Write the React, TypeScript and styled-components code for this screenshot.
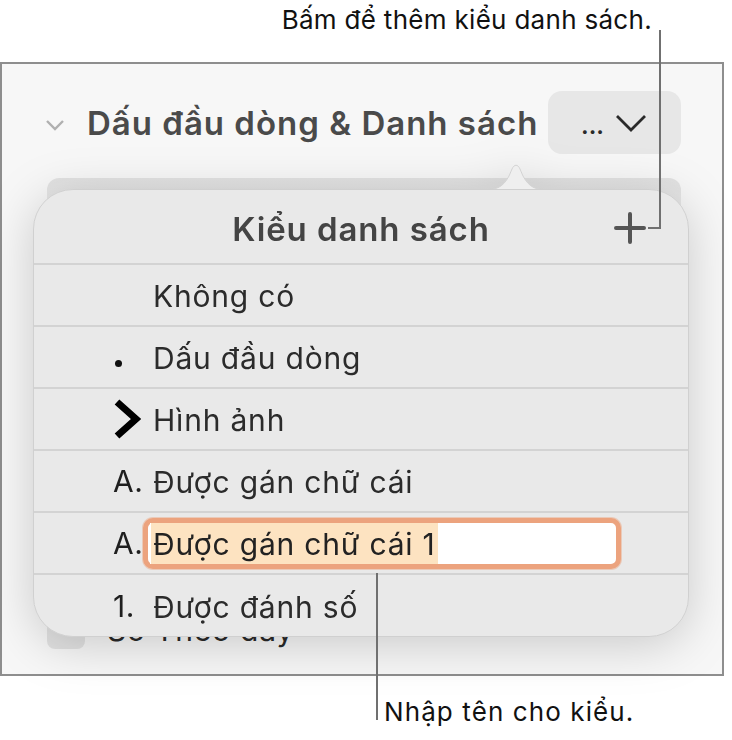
import React from 'react';
import styled, { createGlobalStyle } from 'styled-components';

const GlobalStyle = createGlobalStyle`
  html, body {
    margin: 0;
    padding: 0;
    background: #ffffff;
  }
  body {
    font-family: Inter, 'Noto Sans', sans-serif;
    color: #1f1f1f;
  }
`;

type MarkerKind = 'none' | 'bullet' | 'image' | 'letter' | 'number';

interface ListStyle {
  marker: MarkerKind;
  name: string;
  editing?: boolean;
}

const listStyles: ListStyle[] = [
  { marker: 'none', name: 'Không có' },
  { marker: 'bullet', name: 'Dấu đầu dòng' },
  { marker: 'image', name: 'Hình ảnh' },
  { marker: 'letter', name: 'Được gán chữ cái' },
  { marker: 'letter', name: 'Được gán chữ cái 1', editing: true },
  { marker: 'number', name: 'Được đánh số' },
];

const Marker: React.FC<{ kind: MarkerKind }> = ({ kind }) => {
  switch (kind) {
    case 'bullet':
      return <Dot />;
    case 'image':
      return (
        <svg width="30" height="42" viewBox="0 0 30 42">
          <path
            d="M4 4 L23 21 L4 38"
            fill="none"
            stroke="#000"
            strokeWidth="7"
            strokeLinejoin="miter"
          />
        </svg>
      );
    case 'letter':
      return <MarkerText>A.</MarkerText>;
    case 'number':
      return <MarkerText>1.</MarkerText>;
    default:
      return null;
  }
};

const App: React.FC = () => {
  return (
    <Stage>
      <GlobalStyle />
      <TopNote>Bấm để thêm kiểu danh sách.</TopNote>

      <Panel>
        <SectionHeader>
          <Disclosure width="20" height="12" viewBox="0 0 20 12">
            <path d="M2 2 L10 10 L18 2" fill="none" stroke="#b0b0b0" strokeWidth="2.4" />
          </Disclosure>
          <SectionTitle>Dấu đầu dòng &amp; Danh sách</SectionTitle>
          <MenuButton>
            <Ellipsis>...</Ellipsis>
            <svg width="34" height="20" viewBox="0 0 34 20">
              <path d="M3 3 L17 17 L31 3" fill="none" stroke="#2a2a2a" strokeWidth="2.8" />
            </svg>
          </MenuButton>
        </SectionHeader>
        <StylePicker />
        <CheckRow>
          <CheckBox />
          <CheckLabel>Số Theo dãy</CheckLabel>
        </CheckRow>
      </Panel>

      <BottomNote>Nhập tên cho kiểu.</BottomNote>

      <Popover>
        <Arrow width="66" height="30" viewBox="0 0 66 30">
          <path
            d="M0 30 C14 30 20 27 26 16 L29 9 C31 4 35 4 37 9 L40 16 C46 27 52 30 66 30 Z"
            fill="#efefef"
          />
          <path
            d="M0 30 C14 30 20 27 26 16 L29 9 C31 4 35 4 37 9 L40 16 C46 27 52 30 66 30"
            fill="none"
            stroke="#d2d2d2"
            strokeWidth="1"
          />
        </Arrow>
        <PopoverBody>
          <PopoverHeader>
            <PopoverTitle>Kiểu danh sách</PopoverTitle>
            <AddButton width="32" height="32" viewBox="0 0 32 32">
              <path d="M16 2 V30 M2 16 H30" stroke="#555" strokeWidth="4" strokeLinecap="round" />
            </AddButton>
          </PopoverHeader>
          {listStyles.map(item => (
            <StyleRow key={item.name} last={item.marker === 'number'}>
              <MarkerCell>
                <Marker kind={item.marker} />
              </MarkerCell>
              {item.editing ? (
                <NameField>
                  <Selection>{item.name}</Selection>
                </NameField>
              ) : (
                <StyleName>{item.name}</StyleName>
              )}
            </StyleRow>
          ))}
        </PopoverBody>
      </Popover>

      <Leaders width="732" height="740" viewBox="0 0 732 740">
        <path d="M660 30 V228 H648" fill="none" stroke="#707070" strokeWidth="2" />
        <path d="M377 573 V720" fill="none" stroke="#707070" strokeWidth="2" />
      </Leaders>
    </Stage>
  );
};

export default App;

const Stage = styled.div`
  position: relative;
  width: 732px;
  height: 740px;
  overflow: hidden;
`;

const TopNote = styled.div`
  height: 62px;
  box-sizing: border-box;
  padding: 4px 80px 0 0;
  text-align: right;
  font-size: 26px;
  letter-spacing: 0.3px;
  line-height: 32px;
  color: #111;
`;

const BottomNote = styled.div`
  padding: 20px 0 0 384px;
  font-size: 26px;
  letter-spacing: 1.1px;
  line-height: 32px;
  color: #111;
`;

const Panel = styled.div`
  width: 724px;
  height: 614px;
  box-sizing: border-box;
  border: 2px solid #8e8e8e;
  background: #f7f7f7;
  display: flex;
  flex-direction: column;
`;

const SectionHeader = styled.div`
  display: flex;
  align-items: center;
  padding: 27px 41px 0 43px;
`;

const Disclosure = styled.svg`
  flex: none;
  margin-right: 22px;
  margin-top: 4px;
`;

const SectionTitle = styled.div`
  flex: 1;
  font-size: 33px;
  font-weight: 600;
  color: #4a4a4a;
  letter-spacing: 1px;
`;

const MenuButton = styled.div`
  width: 133px;
  height: 63px;
  border-radius: 14px;
  background: #e7e7e7;
  display: flex;
  align-items: center;
  justify-content: center;
  gap: 10px;
`;

const Ellipsis = styled.span`
  font-size: 24px;
  font-weight: 600;
  color: #2a2a2a;
  margin-top: 6px;
`;

const StylePicker = styled.div`
  height: 60px;
  margin: 24px 41px 0 45px;
  border-radius: 12px;
  background: linear-gradient(#e2e2e2, #ececec);
`;

const CheckRow = styled.div`
  display: flex;
  align-items: center;
  gap: 22px;
  margin: auto 0 25px 45px;
`;

const CheckBox = styled.div`
  width: 38px;
  height: 38px;
  border-radius: 8px;
  background: #e2e2e2;
`;

const CheckLabel = styled.span`
  font-size: 30px;
  letter-spacing: 0.8px;
  color: #2a2a2a;
`;

const Popover = styled.div`
  position: absolute;
  left: 33px;
  top: 160px;
  width: 656px;
  display: flex;
  flex-direction: column;
  filter: drop-shadow(0 8px 24px rgba(0, 0, 0, 0.18));
`;

const Arrow = styled.svg`
  display: block;
  margin-left: 450px;
  margin-bottom: -1px;
`;

const PopoverBody = styled.div`
  height: 448px;
  box-sizing: border-box;
  border-radius: 40px;
  background: #e9e9e9;
  border: 1px solid #d0d0d0;
  overflow: hidden;
  display: flex;
  flex-direction: column;
`;

const PopoverHeader = styled.div`
  position: relative;
  height: 73px;
  display: flex;
  align-items: center;
  justify-content: center;
`;

const PopoverTitle = styled.div`
  font-size: 33px;
  font-weight: 600;
  letter-spacing: 0.9px;
  color: #444;
  margin-top: 4px;
`;

const AddButton = styled.svg`
  position: absolute;
  right: 42px;
  top: 22px;
`;

const StyleRow = styled.div<{ last?: boolean }>`
  height: 62px;
  flex: ${p => (p.last ? 1 : 'none')};
  box-sizing: border-box;
  border-top: 2px solid #d3d3d3;
  display: flex;
  align-items: center;
  padding-left: 79px;
`;

const MarkerCell = styled.div`
  width: 40px;
  flex: none;
  display: flex;
  align-items: center;
`;

const MarkerText = styled.span`
  font-size: 30px;
  letter-spacing: 0.6px;
  color: #1f1f1f;
`;

const Dot = styled.span`
  width: 7px;
  height: 7px;
  border-radius: 50%;
  background: #111;
  margin: 12px 0 0 2px;
`;

const StyleName = styled.span`
  font-size: 30px;
  letter-spacing: 0.8px;
  color: #2b2b2b;
  margin-top: 2px;
`;

const NameField = styled.div`
  width: 478px;
  height: 51px;
  box-sizing: border-box;
  margin-left: -10px;
  padding: 0 2px;
  border: 5px solid #eca37e;
  border-radius: 10px;
  background: #ffffff;
  box-shadow: 0 0 0 1px rgba(236, 163, 126, 0.45);
  display: flex;
  align-items: stretch;
`;

const Selection = styled.span`
  display: flex;
  align-items: center;
  padding: 2px 2px 0 2px;
  background: #fde3c1;
  border-left: 1px solid #fff;
  font-size: 30px;
  letter-spacing: 0.8px;
  color: #222;
  white-space: nowrap;
`;

const Leaders = styled.svg`
  position: absolute;
  left: 0;
  top: 0;
  pointer-events: none;
`;
